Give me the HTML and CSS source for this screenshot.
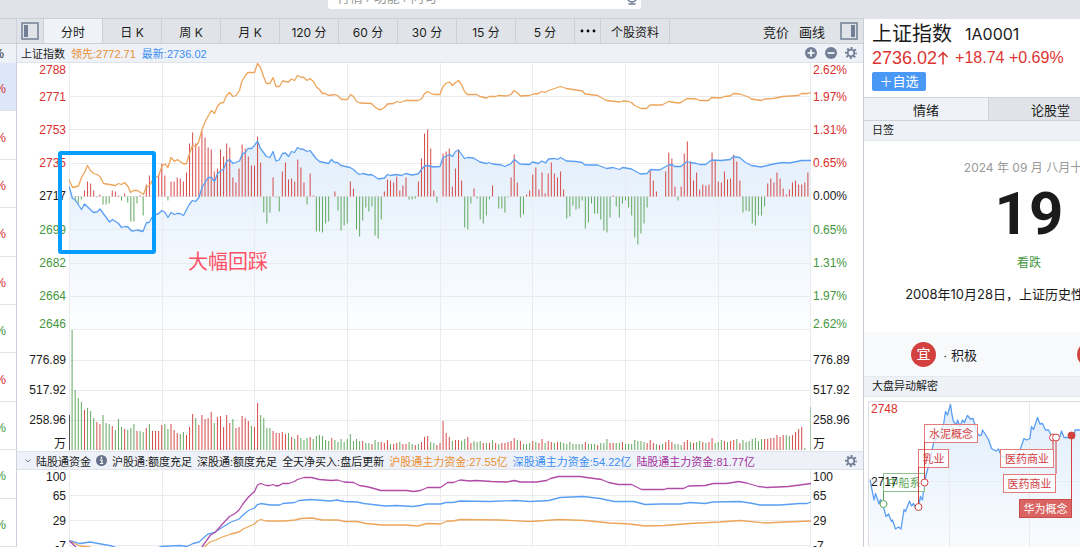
FILE: index.html
```html
<!DOCTYPE html>
<html lang="zh-CN">
<head>
<meta charset="utf-8">
<title>上证指数 1A0001</title>
<link rel="stylesheet" href="styles.css">
</head>
<body>
<div class="app">
  <header class="topbar">
    <div class="search">
      <input class="search-input" type="text" aria-label="搜索" placeholder="行情 / 功能 / 问句">
      <svg class="mic" viewBox="0 0 12 16" width="12" height="16" aria-hidden="true"><rect x="3.5" y="1" width="5" height="9" rx="2.5"/><path d="M1 7v1a5 5 0 0 0 10 0V7M6 13v2M2.500 15h7"/></svg>
    </div>
  </header>

  <div class="workspace">
    <aside class="watchlist">
      <div class="watch-gap"></div>
      <div class="watch-head">%</div>
      <div class="watch-row selected up">%</div>
      <div class="watch-row up">%</div>
      <div class="watch-row up">%</div>
      <div class="watch-row up">%</div>
      <div class="watch-row up">%</div>
      <div class="watch-row down">%</div>
      <div class="watch-row up">%</div>
      <div class="watch-row down">%</div>
      <div class="watch-row down">%</div>
      <div class="watch-row down">%</div>
    </aside>

    <main class="main">
      <nav class="toolbar">
        <button class="icon-btn" aria-label="左侧栏"><svg viewBox="0 0 18 18" width="18" height="18" aria-hidden="true"><rect x="1" y="1" width="16" height="16" fill="none" stroke="#727e95" stroke-width="1.500"/><rect x="3" y="3" width="4" height="12" fill="#727e95"/></svg></button>
        <button class="period active">分时</button>
        <button class="period">日 K</button>
        <button class="period">周 K</button>
        <button class="period">月 K</button>
        <button class="period">120 分</button>
        <button class="period">60 分</button>
        <button class="period">30 分</button>
        <button class="period">15 分</button>
        <button class="period">5 分</button>
        <button class="period more" aria-label="更多"><svg viewBox="0 0 16 4" width="16" height="4" aria-hidden="true"><circle cx="2" cy="2" r="1.400"/><circle cx="8" cy="2" r="1.400"/><circle cx="14" cy="2" r="1.400"/></svg></button>
        <button class="period info">个股资料</button>
        <span class="spacer"></span>
        <button class="tool">竞价</button>
        <button class="tool">画线</button>
        <button class="icon-btn right" aria-label="右侧栏"><svg viewBox="0 0 18 18" width="18" height="18" aria-hidden="true"><rect x="1" y="1" width="16" height="16" fill="none" stroke="#727e95" stroke-width="1.500"/><rect x="11" y="3" width="4" height="12" fill="#727e95"/></svg></button>
      </nav>

      <div class="strip">
        <span>上证指数</span>
        <span class="orange">领先:2772.71</span>
        <span class="blue">最新:2736.02</span>
        <span class="spacer"></span>
        <button class="round" aria-label="放大"><svg viewBox="0 0 12 12" width="12" height="12"><circle cx="6" cy="6" r="6" fill="#727e95"/><path d="M2.500 6h7M6 2.500v7" stroke="#fff" stroke-width="1.600"/></svg></button>
        <button class="round" aria-label="缩小"><svg viewBox="0 0 12 12" width="12" height="12"><circle cx="6" cy="6" r="6" fill="#727e95"/><path d="M2.500 6h7" stroke="#fff" stroke-width="1.600"/></svg></button>
        <button class="round" aria-label="设置"><svg viewBox="0 0 12 12" width="12" height="12"><circle cx="6" cy="6" r="5" fill="none" stroke="#727e95" stroke-width="2" stroke-dasharray="2 1.927" stroke-dashoffset="1"/><circle cx="6" cy="6" r="3.300" fill="none" stroke="#727e95" stroke-width="1.800"/></svg></button>
      </div>

      <section class="chart price">
        <div class="axis left">
          <span class="up">2788</span><span class="up">2771</span><span class="up">2753</span><span class="up">2735</span><span>2717</span><span class="down">2699</span><span class="down">2682</span><span class="down">2664</span><span class="down">2646</span><span>776.89</span><span>517.92</span><span>258.96</span><span>万</span>
        </div>
        <svg class="plot" id="price" viewBox="69 63 742 388" preserveAspectRatio="none" role="img" aria-label="分时走势">
          <defs><linearGradient id="fade" x1="0" y1="140" x2="0" y2="330" gradientUnits="userSpaceOnUse"><stop offset="0" stop-color="#2f8bea" stop-opacity=".14"/><stop offset=".5" stop-color="#2f8bea" stop-opacity=".08"/><stop offset="1" stop-color="#2f8bea" stop-opacity="0.010"/></linearGradient></defs>
        </svg>
        <div class="axis">
          <span class="up">2.62%</span><span class="up">1.97%</span><span class="up">1.31%</span><span class="up">0.65%</span><span>0.00%</span><span class="down">0.65%</span><span class="down">1.31%</span><span class="down">1.97%</span><span class="down">2.62%</span><span>776.89</span><span>517.92</span><span>258.96</span><span>万</span>
        </div>
        <div class="highlight"></div>
        <div class="remark">大幅回踩</div>
      </section>

      <div class="strip funds">
        <svg class="chevron" viewBox="0 0 8 6" width="8" height="6" aria-hidden="true"><path d="M1.500 1.500 4 4l2.500-2.500" fill="none" stroke="#727e95"/></svg>
        <span>陆股通资金</span>
        <svg viewBox="0 0 12 12" width="11" height="11" aria-hidden="true"><circle cx="6" cy="6" r="6" fill="#66728b"/><circle cx="6" cy="3" r="1" fill="#fff"/><path d="M4.500 5.500h2v3.500M4.300 9.300h3.600" fill="none" stroke="#fff" stroke-width="1.300"/></svg>
        <span>沪股通:额度充足</span>
        <span>深股通:额度充足</span>
        <span>全天净买入:盘后更新</span>
        <span class="orange">沪股通主力资金:27.55亿</span>
        <span class="blue">深股通主力资金:54.22亿</span>
        <span class="purple">陆股通主力资金:81.77亿</span>
        <span class="spacer"></span>
        <button class="round" aria-label="设置"><svg viewBox="0 0 12 12" width="12" height="12"><circle cx="6" cy="6" r="5" fill="none" stroke="#727e95" stroke-width="2" stroke-dasharray="2 1.927" stroke-dashoffset="1"/><circle cx="6" cy="6" r="3.300" fill="none" stroke="#727e95" stroke-width="1.800"/></svg></button>
      </div>

      <section class="chart flow">
        <div class="axis left"><span>100</span><span>65</span><span>29</span><span>-7</span></div>
        <svg class="plot" id="flow" viewBox="69 470 742 84" preserveAspectRatio="none" role="img" aria-label="陆股通资金走势"></svg>
        <div class="axis"><span>100</span><span>65</span><span>29</span><span>-7</span></div>
      </section>
    </main>

    <aside class="side">
      <div class="side-inner">
        <div class="quote">
          <div class="quote-name"><h1>上证指数</h1><span>1A0001</span></div>
          <div class="quote-price"><strong>2736.02<svg viewBox="0 0 12 14" width="12" height="14" aria-label="涨"><path d="M6 13.500V1.500M1.500 6 6 1.500 10.500 6" fill="none" stroke="currentColor" stroke-width="1.500"/></svg></strong><span>+18.74 +0.69%</span></div>
          <button class="add">＋自选</button>
        </div>
        <nav class="side-tabs"><button class="active">情绪</button><button>论股堂</button><button></button></nav>
        <h2 class="side-title">日签</h2>
        <div class="daily">
          <div class="date">2024 年 09 月 八月十七</div>
          <div class="day">19</div>
          <div class="mood">看跌</div>
          <p>2008年10月28日，上证历史性大底1664点</p>
        </div>
        <div class="advice"><span class="badge">宜</span><span class="advice-text">· 积极</span><span class="badge">忌</span></div>
        <h2 class="side-title">大盘异动解密</h2>
        <div class="events">
          <svg id="events" viewBox="869 402 324 145" width="324" height="145" role="img" aria-label="大盘异动">
            <defs><linearGradient id="fade-events" x1="0" y1="404" x2="0" y2="547" gradientUnits="userSpaceOnUse"><stop offset="0" stop-color="#2f8bea" stop-opacity=".15"/><stop offset="1" stop-color="#2f8bea" stop-opacity=".03"/></linearGradient></defs>
          </svg>
        </div>
      </div>
    </aside>
  </div>
</div>
<script src="charts.js"></script>
</body>
</html>
```
FILE: styles.css
```css
* { box-sizing: border-box; }
body {
  margin: 0;
  font-family: "Liberation Sans", "Noto Sans CJK SC", sans-serif;
  font-size: 12px;
  color: #1b1b1b;
  background: #fff;
}
button {
  margin: 0;
  padding: 0;
  border: 0;
  background: none;
  font: inherit;
  color: inherit;
}
h1, h2, p { margin: 0; font-weight: 400; }
svg { display: block; flex: none; }

.app { display: flex; flex-direction: column; height: 100vh; overflow: hidden; }
.up { color: #d8302e; }
.down { color: #449740; }
.orange { color: #ea8f33; }
.blue { color: #3a8df2; }
.purple { color: #a32f98; }
.spacer { flex: 1; }

.topbar {
  flex: none;
  height: 18px;
  padding-left: 328px;
  background: #e0e4e8;
  overflow: hidden;
}
.search {
  display: flex;
  align-items: center;
  width: 313px;
  height: 24px;
  margin-top: -15px;
  padding: 0 3px 0 7px;
  background: #fff;
  border-radius: 3px;
}
.search-input { flex: 1; border: 0; outline: 0; background: none; font: inherit; font-size: 13px; }
.search-input::placeholder { color: #999; }
.mic { fill: none; stroke: #727e95; stroke-width: 1.3; }

.workspace { display: flex; flex: 1; min-height: 0; }

.watchlist {
  flex: none;
  display: flex;
  flex-direction: column;
  width: 17px;
  border-right: 1px solid #cbd1dd;
  overflow: hidden;
}
.watch-gap { flex: none; height: 26px; background: #e0e4e8; border-top: 1px solid #cbd0d6; border-bottom: 1px solid #cbd0d6; }
.watch-head, .watch-row {
  display: flex;
  align-items: center;
  justify-content: flex-end;
  padding-right: 12px;
}
.watch-head { flex: none; height: 19px; background: #eef2f8; }
.watch-row { flex: 1; padding-top: 4px; border-bottom: 1px solid #dfe2e7; font-size: 13px; padding-right: 10px; }
.watch-row.selected { background: #dce8fa; }

.main { flex: 1; min-width: 0; display: flex; flex-direction: column; }

.toolbar {
  flex: none;
  display: flex;
  height: 26px;
  background: #e0e4e8;
  border-top: 1px solid #cbd0d6;
  border-bottom: 1px solid #cbd0d6;
  font-family: Inter, "Noto Sans CJK SC", sans-serif;
}
.icon-btn { flex: none; display: flex; align-items: center; justify-content: center; width: 27px; border-right: 1px solid #cbd0d6; }
.icon-btn.right { width: 28px; border: 0; margin-left: 5px; }
.period { flex: 0 0 59px; border-right: 1px solid #cbd0d6; white-space: nowrap; }
.period.active { background: #eff3f8; }
.period.more { flex-basis: 26px; display: flex; align-items: center; justify-content: center; }
.period.info { flex-basis: 69px; }
.tool { flex: none; width: 36px; font-size: 13px; }

.strip {
  flex: none;
  display: flex;
  align-items: center;
  gap: 6px;
  height: 19px;
  padding: 0 6px 0 4px;
  background: #eef2f8;
  border-bottom: 1px solid #e0e4ea;
  font-size: 11px;
  white-space: nowrap;
}
.strip .round { margin-left: 2px; }
.funds { gap: 5px; padding-left: 6px; border-top: 1px solid #e0e4ea; }
.funds .chevron { margin-left: 1px; margin-right: -1px; }

.chart { flex: none; position: relative; display: grid; grid-template-columns: 52px minmax(0, 1fr) 52px; }
.price { height: 388px; }
.flow { height: 84px; }
.plot { width: 100%; height: 100%; }
.axis {
  display: grid;
  grid-template-rows: 27px 33px 33px 33px 34px 33px 33px 28px 36px 30px 30px 24px 14px;
  align-content: start;
  line-height: 14px;
  padding-left: 2px;
}
.flow .axis { grid-template-rows: 19px 25px 25px 14px; }
.axis.left { padding: 0 3px 0 0; text-align: right; }
.highlight {
  position: absolute;
  left: 41px;
  top: 88px;
  width: 98px;
  height: 103px;
  border: 4px solid #079cff;
  border-radius: 3px;
}
.remark { position: absolute; left: 171px; top: 185px; font-size: 20px; line-height: 28px; color: #ff5166; }

.grid { stroke: #e9ebee; fill: none; }
.line { fill: none; stroke-width: 1.3; stroke-linejoin: round; }
.line, .grid, .bar { vector-effect: non-scaling-stroke; }
.line-orange { stroke: #eda55b; }
.line-blue { stroke: #5b9ff3; }
.line-purple { stroke: #b14ba8; }
.bar-up { stroke: #d54b49; }
.bar-down { stroke: #62a85f; }
.area { fill: url(#fade); }
.area-events { fill: url(#fade-events); }

.side { flex: 0 0 217px; border-left: 1px solid #c8cdd7; overflow: hidden; }
.side-inner { width: 330px; }
.quote { height: 79px; padding-left: 8px; border-top: 1px solid #dfe3e8; }
.quote-name { display: flex; align-items: center; gap: 13px; height: 29px; font-family: Inter, "Noto Sans CJK SC", sans-serif; font-size: 16px; }
.quote-name h1 { font-size: 20px; line-height: 28px; }
.quote-price { display: flex; align-items: center; gap: 6px; height: 20px; font-size: 16px; color: #dc3533; white-space: nowrap; }
.quote-price strong { display: flex; align-items: center; font-size: 18px; font-weight: 400; }
.add { display: block; width: 54px; height: 19px; margin-top: 4px; border-radius: 2px; background: #4a98f5; color: #fff; font-size: 13px; line-height: 19px; }
.side-tabs { display: flex; height: 24px; border-top: 1px solid #cfd4da; border-bottom: 1px solid #cfd4da; font-size: 13px; }
.side-tabs button { flex: 0 0 124px; background: #e0e4e8; border-left: 1px solid #cfd4da; }
.side-tabs .active { background: #eff3f8; border-left: 0; }
.side-title { height: 20px; padding-left: 8px; background: #eef2f6; border-bottom: 1px solid #e6eaee; font-size: 11px; line-height: 19px; }
.daily {
  height: 191px;
  padding-top: 17px;
  text-align: center;
  font-family: Inter, "Noto Sans CJK SC", sans-serif;
  white-space: nowrap;
}
.date { color: #999; font-size: 12px; line-height: 20px; }
.day { font-family: Roboto, sans-serif; font-weight: 700; font-size: 60px; line-height: 72px; }
.mood { color: #449740; line-height: 20px; margin-top: 3px; }
.daily p { font-size: 13px; line-height: 20px; margin-top: 11px; }
.advice { display: flex; align-items: center; height: 45px; padding-left: 47px; background: #f7f9fb; border-bottom: 1px solid #e6eaee; font-size: 13px; }
.badge { display: grid; place-items: center; width: 25px; height: 25px; border-radius: 50%; background: #d2413f; color: #fff; font-size: 14px; line-height: 14px; }
.advice-text { width: 141px; padding-left: 7px; }
.events { margin: 4px 0 0 4px; border: 1px solid #d9dde2; border-width: 1px 0 0 1px; border-radius: 3px; }
.tag { font-size: 11px; }
.tag-box { fill: #fff; fill-opacity: .75; stroke: #e27b79; }
```
FILE: charts.js
```js
const NS = 'http://www.w3.org/2000/svg';

function add(parent, name, attrs, text) {
  const el = document.createElementNS(NS, name);
  for (const key in attrs) el.setAttribute(key, attrs[key]);
  if (text) el.textContent = text;
  parent.appendChild(el);
  return el;
}

function gridLines(svg, rows, cols, box) {
  rows.forEach(y => add(svg, 'path', { class: 'grid', d: `M${box[0]} ${y}H${box[2]}` }));
  cols.forEach(x => add(svg, 'path', { class: 'grid', d: `M${x} ${box[1]}V${box[3]}` }));
}

const line = (svg, points, color) => add(svg, 'polyline', { class: 'line line-' + color, points });

const START = 69;
const STEP = 742 / 240;
const COLS = [69.5, 162.5, 254.5, 347.5, 440.5, 532.5, 625.5, 718.5, 810.5];

const price = document.getElementById('price');
const blue = '69,186 72.5,198.500 75,199.500 81.500,209.500 84.500,204 93.500,212.500 97,212 100,209 109.500,222 112.500,219.500 118.500,223.500 121.500,227.500 125,226.500 128,227 131,230.500 134,231 137,230 143,231.500 146.500,222.500 149,222.500 153.500,215 158,214 162,210.500 165,212.500 168,217.500 171,212.500 174.500,214.500 177,213.500 180,213.500 183.500,215.500 189.500,204 192.500,200.500 195.500,201.500 199,197.500 202,187.500 208,177.500 211.500,177.500 214.500,181.500 217.500,173.500 221,170.500 223.500,169.500 226.500,161.500 229.500,159.500 233,163.500 239.500,161 242.500,153.500 245,153 248,148.500 251.500,148.500 254.500,145.500 257.500,141 260.500,148.500 266.500,156.500 270,157.500 273,151.500 276,161 279,160 282.500,153.500 285.500,153 288.500,156.500 291.500,151.500 294.500,152.500 297.500,147.500 300.500,149 304,149.500 307,151.500 310,150.500 316,158.500 319.500,161.500 328.500,163.500 331.500,159.500 334.500,162.500 337.500,162.500 341,165.500 350,167.500 353.500,169.500 356.500,172.500 359.500,174.500 362.500,173.500 369,175 371.500,174.500 378.500,179 384.500,178 387.500,174.500 390.500,175.500 396.500,174.500 401.500,175.500 405.500,173.500 412,175 418,174 421.500,169.500 424.500,166 427.500,165.500 433.500,167 440,166.500 443,157.500 446.500,156 449.500,154.500 452.500,156.500 455.500,151.500 458.500,150 464.500,158.500 467.500,157.500 473.500,158 480,162 486.500,163.500 489,162.500 492.500,164 501.500,165 504.500,166.500 510.500,164 514.500,159.500 520,164 529.500,164.500 532.500,162 538.500,163.500 542,161 545.500,163 548.500,159 554.500,158.500 557.500,159.500 560.500,157.500 566.500,161 576,161.500 582,162.500 585,165 597.500,165 606.500,168.500 613,167.500 619.500,169.500 622.500,167.500 631.500,169 640.500,174 647,173.500 650.500,169.500 659.500,170 668.500,165 672,164.500 674.500,166.500 681,166.500 684.500,163.500 687,161.500 690.500,162.500 696.500,163.500 699.500,164.500 705.500,164.500 711.500,160 721,160.500 730,159.500 733.500,156.500 739.500,157.500 745.500,162.500 751.500,165.500 761,167 773.500,164 782.500,162.500 789.500,163 801.500,160.500 811,160.500';
const orange = '69,179.500 72.500,187.500 78.500,186 81.500,177.500 84.500,172.500 87.500,165.500 90.500,170.500 93.500,173.500 97,174.500 100,176.500 103.500,183.500 115.500,185.500 118.500,183.500 121.500,184.500 124.500,182.500 128,186.500 130.500,192.500 133.500,190.500 137.500,190.500 143.500,194.500 146,187.500 149.500,185.500 153.500,178.500 158.500,176 162,166 165,164 168,167.500 171,157.500 174.500,161.500 177.500,159.500 183.500,164 186.500,163.500 189.500,153.500 192.500,145.500 195.500,146.500 198.500,142.500 202,129.500 205.500,121 208.500,115.500 211.500,110.500 214.500,113.500 217.500,106 220.500,103 223.500,102.500 226.500,95.500 229.500,92.500 233,96.500 236,95.500 239.500,90.500 242,81 245,76 248,72.500 254.500,72.500 257.500,63.500 260.500,67.500 263.500,76.500 266.500,83.500 270,83.500 273,77.500 276,86.500 279.500,86.500 282.500,81 288.500,82 291.500,79 294.500,80.500 297.500,75.500 300.500,77 304,77.500 307,80.500 310,78.500 313.500,81.500 316.500,87 319.500,89.500 322.500,93.500 325.500,93.500 328.500,95.500 334.500,94.500 337.500,95.500 341,99 344,99.500 347.500,99.500 350.500,94.500 353.500,96.500 356.500,101.500 360,103 371.500,103.500 375,107 378.500,109.500 381,109.500 384.500,107.500 387.500,104 393.500,103.500 396.500,101.500 400,102.500 405.500,100.500 418,100.500 421.500,99 424.500,93.500 427.500,91.500 433.500,94.500 440,94.500 443,86.500 446.500,83 449.500,82 452.500,85.500 455.500,82.500 458.500,80.500 461.500,84.500 464.500,91.500 467.500,94.500 476.500,94.500 480,96.500 486.500,98 489.500,96.500 495.500,96.500 498.500,95.500 506.500,96 511,94.500 514,90.500 517,92.500 520.500,96 529.500,95.500 533.500,94 538.500,93.500 541.500,91.500 545,92.500 548.500,90.500 554.500,88.500 560.500,86.500 566.500,88.500 582.500,91 585,94 597.500,95.500 606.500,100.500 619.500,102 622.500,101 628.500,101.500 631.500,102.500 634.500,105.500 641,108.500 646.500,108.500 650,105 662,105 668.500,101.500 678,103 681,102.500 687,98.500 696.500,99 699.500,100.500 708.500,100.500 711.500,97.500 721,98 724.500,96.500 730,96 733.500,93.500 739.500,94 748.500,97 751.500,99 761.500,100.500 764.500,99 773.500,98.500 782.500,96.500 798.500,95.500 801.500,93.500 807.500,93.500 811,92.500';

add(price, 'polygon', { class: 'area', points: `69,330 ${blue} 811,330` });
gridLines(price, [96.5, 129.5, 163.5, 196.5, 229.5, 263.5, 296.5, 329.5, 360.5, 390.5, 420.5], COLS, [69, 63, 811, 451]);

// Distance of each minute bar from the zero line, in chart units.
const momentum = [
  0, 0, -5, -7, -3, 6, 15, 13, 6, -1, 2, -8, -8, -7, 6, 5, 1, -4, 3, -6,
  -25, -25, -7, 1, -19, 12, 21, 15, 15, 22, 33, 21, -4, 15, 15, 19, 18, 15, 24, 53,
  64, 53, 50, 65, 59, 49, 47, 25, 28, 47, 40, 53, 49, 19, 14, 28, 52, 48, 40, 31,
  31, 60, 34, -16, -27, -16, 19, -1, -15, 25, 34, 17, 18, 15, 37, 29, 14, -8, 23, 1,
  -35, -35, -36, -27, -25, 0, 5, -14, -34, -29, -27, 15, 8, -33, -40, -24, -11, -15, -10, -39,
  -42, -23, 5, 17, 16, 14, 20, 6, 11, 19, -3, -3, -2, 15, 38, 63, 67, 48, 6, -6,
  0, 43, 45, 48, 10, 28, 47, 16, -31, -33, -7, 8, -2, -23, -27, -19, -3, 11, 0, -12,
  -12, -16, -1, 19, 42, 14, -21, -18, 2, 6, 22, 29, 7, 24, 3, 23, 34, 23, 19, 25,
  7, -22, -20, -9, -13, -12, -4, -32, -26, -7, -17, -17, -23, -34, -36, -21, 1, -10, -21, -7,
  -4, -11, -19, -41, -48, -37, -27, -11, 26, 16, 5, 0, 0, 25, 44, 38, 10, -4, 10, 43,
  55, 35, 16, 24, 7, 12, 11, 12, 44, 36, 15, 14, 25, 17, 18, 42, 35, 16, -16, -14,
  -15, -27, -29, -19, -19, -10, 13, 18, 14, 24, 18, 8, 2, 7, 14, 16, 12, 12, 14, 24
];

// Turnover per minute: direction and height.
const turnover = `g0 g120 g60 g52 g48 r40 g42 g39 g32 r28 r26 g35 g27 g26 r24 g20 g31 g23 r21 g20
g22 g26 r19 g19 g18 r22 g26 r19 r19 r19 r25 g26 g21 r26 r20 r17 g16 g18 r15 r23
r36 g32 r25 r35 r31 r32 r38 g27 r33 r34 r23 r35 r27 g31 r22 r23 r34 r32 r29 g24
r23 r47 g35 g32 g22 g22 r19 r17 r17 r18 r16 g17 r13 g11 r15 g12 g10 g12 r13 g11
g14 g15 g14 g10 g9 r12 g10 g8 g11 g8 g11 g16 g9 g11 g9 r9 g7 g7 r6 g10
g8 r8 r7 r10 g6 r6 r7 g8 r6 r6 g8 g6 r5 g6 r8 r13 r14 g8 g7 r5
r7 r29 r17 r13 g9 r10 r10 g9 g11 r13 r7 g9 g8 g9 r7 g7 r7 g10 r7 g6
r7 r7 r8 r9 r12 g10 r9 g6 g6 g7 r9 g8 r7 r11 g7 r9 r8 g7 r8 g8
g7 g6 g8 g6 g6 g6 g6 r8 g6 g6 g6 r5 g7 g7 g11 r7 r7 g7 g7 r8
g6 g6 g6 g10 g9 g9 g8 r7 r10 r7 g6 r5 g6 r8 r10 r8 g6 g6 g5 r8
r10 g8 r7 g8 g9 r8 g7 r8 r12 g7 g8 g10 r9 g8 r9 r10 g11 r7 g10 g8
g9 g11 g12 g9 g11 r11 r11 r12 r12 r15 r13 r15 g15 g14 r15 r18 r21 r23 g2 g0 g43`.split(/\s+/);

function bars(svg, base, values) {
  const paths = { up: '', down: '' };
  values.forEach(([dir, height], i) => {
    if (height) paths[dir] += `M${(START + i * STEP).toFixed(2)} ${base}v${-height}`;
  });
  for (const dir in paths) add(svg, 'path', { class: 'bar bar-' + dir, d: paths[dir] });
}

bars(price, 196.5, momentum.map(v => [v > 0 ? 'up' : 'down', v]));
bars(price, 450, turnover.map(v => [v[0] === 'r' ? 'up' : 'down', Number(v.slice(1))]));
add(price, 'path', { d: 'M69.500 450v-35', stroke: '#555' });
line(price, orange, 'orange');
line(price, blue, 'blue');

const flow = document.getElementById('flow');
gridLines(flow, [495.5, 520.5, 545.5], COLS, [69, 470, 811, 554]);
line(flow, '69.500,541 80,546 90,547 97,550 120,556 190,556 202,549 210,542 216,540 221,537.500 231,534 239,532 243,529 254.500,524 258,520.500 261,519.500 266,521 285,521 295,520 301,518.500 312,518 322,520 338,520 345,521.500 357,521.500 366,523.500 382,525 405,525 418,526 427,523.500 440.500,524 447,521 453,521 460,519.500 500,520 530,521.500 560,519.500 585,520.500 610,523 630,524 645,526 664,525.500 690,523.500 720,522 740,520.500 765,523 785,522 811,521', 'orange');
line(flow, '69.500,540.500 80,543.500 90,542 112,546 120,549 155,549 161,546.500 180,545.500 187,546.500 193,543.500 199,542 208,534 215,532 230,522.500 239,519 243,515 248.500,510.500 254.500,508 257.500,504.500 261,503.500 270,505 279.500,505 283,503.500 294.500,502.500 299,500.500 311,499.500 330,501 337,500 344,501.500 357,502 364,503.500 385,506 396,505.500 413,506.500 420,505.500 427,504 440.500,504 446,502.500 453,502.500 460,501 490,501.500 515,500.500 530,501.500 549,500.500 560,497.500 583,496.500 600,498.500 614,501.500 634,501.500 645,504.500 660,504 680,504 690,502.500 705,503.500 713,502 740,501.500 750,503 760,505 780,505 800,503.500 807,503.500 811,502', 'blue');
line(flow, '69.500,541 78,549 90,556 190,556 200.500,549 210.500,535 215,532.500 222.500,524 229.500,516.500 235,513.500 239,510 242.500,504.500 248.500,497 254.500,491.500 257.500,485 260.500,483.500 266.500,485.500 270,485.500 273,484.500 276,486 279.500,485.500 282.500,483.500 288.500,483.500 294.500,481.500 297.500,479.500 304,477.500 311.500,477.500 319.500,479.500 331.500,480.500 337.500,480 344,482 353.500,482.500 359.500,485.500 368.500,487 381,490.500 406.500,490.500 413.500,491.500 420.500,490.500 427.500,487.500 440.500,487.500 447.500,482.500 453.500,482.500 460,480 470,481 476,480.500 491.500,481.500 506.500,482 514.500,480.500 520,482 536.500,482 546.500,480.500 550.500,478.500 558.500,476.500 580,476.500 586.500,477.500 601.500,479.500 608.500,482.500 618.500,484.500 631.500,484.500 641.500,489.500 663.500,489.500 667,488.500 683.500,488.500 688.500,486 705,485.500 713.500,483.500 726.500,483.500 738.500,481.500 746.500,483 758.500,486.500 766.500,487.500 788.500,486.500 811,483.500', 'purple');

const events = document.getElementById('events');
const index = '870,479.500 874,500 875.500,493.500 879,504 880.500,499.500 883.500,507 886,516.500 888.500,514 891.500,521.500 892.500,520 895.500,529 898.500,527 901,529 904,509.500 905.500,511.500 909.500,501 911.500,506 913.500,503.500 915.500,508 918.500,506.500 920.500,496.500 922.500,500 924.500,481.500 926.500,473.500 930,460 932,450 934,441.500 940,433.500 943.500,425 945.500,411.500 947.500,415 950.500,404.500 952,415 953.500,421.500 956.500,425 957.500,420 960,426.500 962.500,420 964.500,422.500 966,418.500 967.500,415.500 970.500,419 973,418.500 975,425 976.500,431.500 979,435.500 981.500,435 982.500,430 986,435.500 988.500,439.500 991.500,448.500 996,451 998.500,449 1001.500,456.500 1004.500,457.500 1006.500,455 1010,456.500 1013,456 1016.500,451.500 1020,450 1024,438.500 1026.500,440 1030,438.500 1031.500,426.500 1033.500,429.500 1037.500,417.500 1040,424 1042.500,423.500 1045.500,430 1048.500,430 1052.500,437.500 1056.500,437.500 1060,436.500 1061.500,431 1064,437.500 1068.500,437.500 1071.500,435.500 1074,437.500 1075,430 1080,430 1100,432 1140,440 1193,436';
add(events, 'polygon', { class: 'area-events', points: `870,547 ${index} 1193,547` });
gridLines(events, [481.5], [949.5, 1029.5, 1109.5], [869, 402, 1193, 547]);
line(events, index, 'blue');

function tag(t) {
  const color = t.color || '#d2413f';
  add(events, 'rect', { class: 'tag-box', x: t.x, y: t.y, width: t.w, height: 18, style: t.solid ? 'fill:#d96462;fill-opacity:1;stroke:#c94a48' : `stroke:${t.edge || '#e27b79'}` });
  add(events, 'path', { d: `M${t.px} ${t.from}V${t.py}`, stroke: color });
  add(events, 'text', { class: 'tag', x: t.x + t.w / 2, y: t.y + 13, 'text-anchor': 'middle', fill: t.solid ? '#fff' : color }, t.text);
  add(events, 'circle', { cx: t.px, cy: t.py, r: 3.5, fill: t.solid ? color : '#fff', stroke: color });
}
tag({ x: 883.5, y: 473.5, w: 41, text: '中船系', px: 883.5, from: 491, py: 504, color: '#5aa457', edge: '#8fc28d' });
tag({ x: 918.5, y: 449.5, w: 30, text: '乳业', px: 918.5, from: 467, py: 507 });
tag({ x: 924.5, y: 424.5, w: 53, text: '水泥概念', px: 924.5, from: 442, py: 482.5 });
tag({ x: 1000.5, y: 449.5, w: 53, text: '医药商业', px: 1053, from: 449, py: 437.5 });
tag({ x: 1003.5, y: 474.5, w: 52, text: '医药商业', px: 1056, from: 474, py: 437.5 });
tag({ x: 1019.5, y: 499.5, w: 52, text: '华为概念', px: 1071.5, from: 499, py: 435.5, solid: true });
add(events, 'text', { x: 871, y: 413, 'font-size': 12, fill: '#d8302e' }, '2748');
add(events, 'text', { x: 871, y: 486, 'font-size': 12, fill: '#1b1b1b' }, '2717');
```
